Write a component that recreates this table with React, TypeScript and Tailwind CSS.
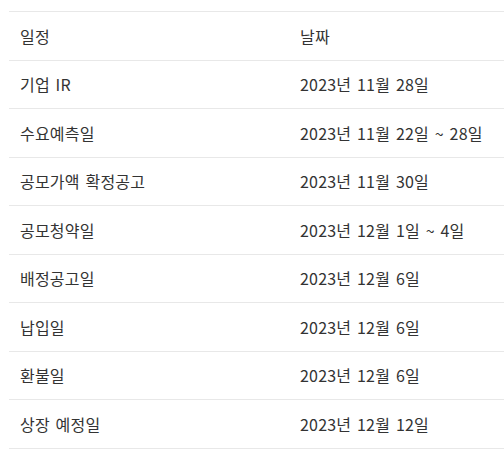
import React from "react";

const rows: [string, string][] = [
  ["기업 IR", "2023년 11월 28일"],
  ["수요예측일", "2023년 11월 22일 ~ 28일"],
  ["공모가액 확정공고", "2023년 11월 30일"],
  ["공모청약일", "2023년 12월 1일 ~ 4일"],
  ["배정공고일", "2023년 12월 6일"],
  ["납입일", "2023년 12월 6일"],
  ["환불일", "2023년 12월 6일"],
  ["상장 예정일", "2023년 12월 12일"],
];

export default function App() {
  return (
    <div
      className="w-[504px] h-[453px] overflow-hidden bg-white pt-[11px] pl-[9px]"
      style={{ fontFamily: '"Noto Sans CJK KR", "Noto Sans", sans-serif' }}
    >
      <div className="w-[520px] border-t border-[#e8e8e8] text-[16px] tracking-[0.2px] [word-spacing:2px] text-[#333]">
        <div className="flex h-[48.5px] items-center border-b border-[#e8e8e8]">
          <div className="w-[280px] pl-[11px]">일정</div>
          <div className="flex-1 pl-[11px]">날짜</div>
        </div>
        {rows.map(([a, b]) => (
          <div key={a} className="flex h-[48.5px] items-center border-b border-[#e8e8e8]">
            <div className="w-[280px] pl-[11px]">{a}</div>
            <div className="flex-1 pl-[11px]">{b}</div>
          </div>
        ))}
      </div>
    </div>
  );
}
